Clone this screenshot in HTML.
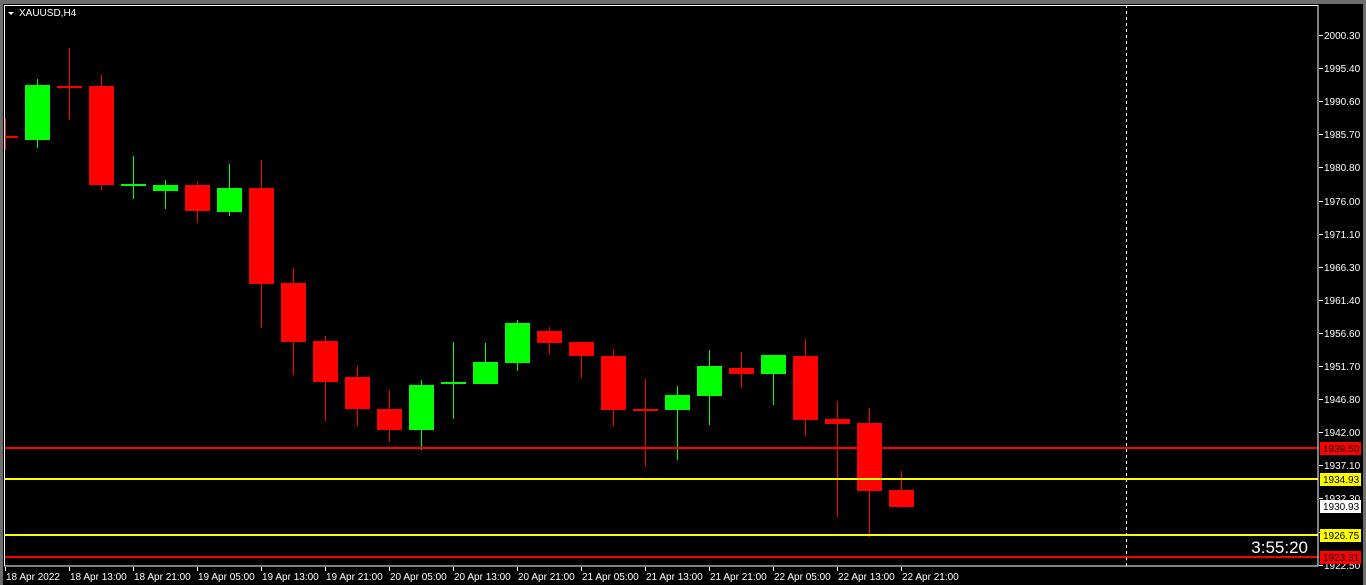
<!DOCTYPE html>
<html><head><meta charset="utf-8"><style>
html,body{margin:0;padding:0;background:#000;width:1366px;height:585px;overflow:hidden}
svg{display:block}
text{font-family:"Liberation Sans",sans-serif;font-size:10px;fill:#fff}
</style></head><body>
<svg width="1366" height="585" viewBox="0 0 1366 585">
<rect x="0" y="0" width="1366" height="585" fill="#000"/>
<rect x="0" y="0" width="1366" height="4" fill="#6e6e6e"/>
<rect x="0" y="0" width="3" height="585" fill="#6e6e6e"/>
<rect x="1363" y="0" width="3" height="585" fill="#6e6e6e"/>
<g id="c"></g>
<!-- horizontal lines -->
<rect x="5" y="447" width="1313" height="2" fill="#f00"/>
<rect x="5" y="478" width="1313" height="2" fill="#ff0"/>
<rect x="5" y="534" width="1313" height="2" fill="#ff0"/>
<rect x="5" y="556" width="1313" height="2" fill="#f00"/>
<line x1="1126.5" y1="5" x2="1126.5" y2="566" stroke="#fff" stroke-dasharray="3,3"/>
<!-- frame -->
<rect x="4.5" y="5.5" width="1313.5" height="560.5" fill="none" stroke="#fff"/>
<polygon points="8,12 14,12 11,15" fill="#fff"/>
<text x="19" y="16" font-size="10">XAUUSD,H4</text>
<text x="1308" y="553" text-anchor="end" style="font-size:17px">3:55:20</text>
<g id="candles"></g>
</svg>
<script>
var s=document.querySelector('svg'),NS='http://www.w3.org/2000/svg';
function el(t,a){var e=document.createElementNS(NS,t);for(var k in a)e.setAttribute(k,a[k]);s.insertBefore(e,document.getElementById('c'));return e}
var C=[[-7,'r',136,138,118,150],[25,'g',85,140,79,148],[57,'r',86,88,48,120],[89,'r',86,185,75,190],
[121,'g',184,186,156,199],[153,'g',185,191,180,209],[185,'r',185,211,181,223],[217,'g',188,212,164,216],
[249,'r',188,284,160,328],[281,'r',283,342,268,375],[313,'r',341,382,336,421],[345,'r',377,409,366,427],
[377,'r',409,430,390,442],[409,'g',385,430,380,450],[441,'g',382,384,342,419],[473,'g',362,384,343,384],
[505,'g',323,363,320,371],[537,'r',331,343,327,355],[569,'r',342,356,342,378],[601,'r',356,410,349,427],
[633,'r',409,410,379,467],[665,'g',395,410,386,460],[697,'g',366,396,350,425],[729,'r',368,374,352,388],
[761,'g',355,374,355,405],[793,'r',356,420,339,436],[825,'r',419,424,401,517],[857,'r',423,491,408,537],
[889,'r',490,507,471,508]];
C.forEach(function(c){var col=c[1]=='g'?'#0f0':'#f00';var x=Math.max(c[0],5);var w=c[0]+25-x;
el('rect',{x:c[0]+12,y:c[4],width:1,height:c[5]-c[4],fill:col});
el('rect',{x:x,y:c[2],width:w,height:Math.max(2,c[3]-c[2]),fill:col});});
var P=['2000.30','1995.40','1990.60','1985.70','1980.80','1976.00','1971.10','1966.30','1961.40','1956.60','1951.70','1946.80','1942.00','1937.10','1932.30','1927.40','1922.50'];
P.forEach(function(p,i){var y=35+i*33.1;el('rect',{x:1319,y:Math.round(y),width:4,height:1,fill:'#fff'});
var t=el('text',{x:1324,y:Math.round(y)+4});t.textContent=p;});
var L=[[448,'#f00','1939.50','#000'],[479,'#ff0','1934.93','#000'],[506,'#fff','1930.93','#000'],[535,'#ff0','1926.75','#000'],[557,'#f00','1923.31','#000']];
L.forEach(function(l){el('rect',{x:1320,y:l[0]-6,width:41,height:13,fill:l[1]});var t=el('text',{x:1323,y:l[0]+4});t.setAttribute('style','fill:'+l[3]);t.textContent=l[2];});
var T=['18 Apr 2022','18 Apr 13:00','18 Apr 21:00','19 Apr 05:00','19 Apr 13:00','19 Apr 21:00','20 Apr 05:00','20 Apr 13:00','20 Apr 21:00','21 Apr 05:00','21 Apr 13:00','21 Apr 21:00','22 Apr 05:00','22 Apr 13:00','22 Apr 21:00'];
T.forEach(function(t,i){var x=5+i*64;el('rect',{x:x,y:567,width:1,height:4,fill:'#fff'});var e=el('text',{x:x+1,y:580});e.textContent=t;});
</script>
</body></html>
